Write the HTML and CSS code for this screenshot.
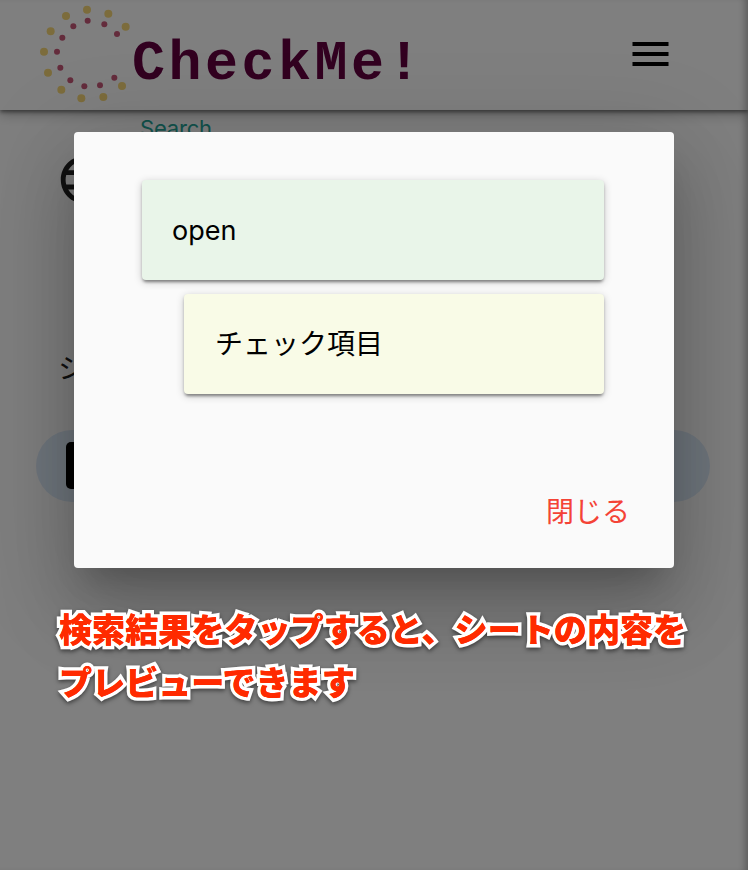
FILE: index.html
```html
<!DOCTYPE html>
<html lang="ja">
<head>
<meta charset="utf-8">
<title>CheckMe!</title>
<link rel="stylesheet" href="styles.css">
</head>
<body>
<div class="app">
  <header class="bar">
    <svg class="dots" viewBox="0 0 300 330" aria-hidden="true">
      <g fill="#f8d978">
        <circle cx="171" cy="29" r="12"/><circle cx="235" cy="41" r="12"/><circle cx="287" cy="80" r="12"/><circle cx="108" cy="48" r="12"/><circle cx="62" cy="94" r="12"/><circle cx="42" cy="155" r="12"/><circle cx="54" cy="218" r="12"/><circle cx="94" cy="269" r="12"/><circle cx="154" cy="295" r="12"/><circle cx="220" cy="291" r="12"/><circle cx="276" cy="258" r="12"/>
      </g>
      <g fill="#c85878">
        <circle cx="173" cy="62" r="9"/><circle cx="223" cy="73" r="9"/><circle cx="261" cy="102" r="9"/><circle cx="130" cy="79" r="9"/><circle cx="97" cy="113" r="9"/><circle cx="81" cy="155" r="9"/><circle cx="91" cy="203" r="9"/><circle cx="121" cy="241" r="9"/><circle cx="163" cy="259" r="9"/><circle cx="210" cy="256" r="9"/><circle cx="253" cy="233" r="9"/>
      </g>
    </svg>
    <span class="brand">CheckMe!</span>
    <svg class="menu" viewBox="0 0 37 24" aria-hidden="true"><path d="M.5 0h36v4H.5zM.5 10h36v4H.5zM.5 20h36v4H.5z"/></svg>
  </header>
  <main class="page">
    <div class="label">Search</div>
    <svg class="globe" viewBox="0 0 24 24" aria-hidden="true"><path d="M11.99 2C6.47 2 2 6.48 2 12s4.47 10 9.99 10C17.52 22 22 17.52 22 12S17.52 2 11.99 2zm6.93 6h-2.95c-.32-1.25-.78-2.45-1.38-3.56 1.84.63 3.37 1.91 4.33 3.56zM12 4.04c.83 1.2 1.48 2.53 1.91 3.96h-3.82c.43-1.43 1.08-2.76 1.91-3.96zM4.26 14C4.1 13.36 4 12.69 4 12s.1-1.36.26-2h3.38c-.08.66-.14 1.32-.14 2s.06 1.34.14 2H4.26zm.82 2h2.95c.32 1.25.78 2.45 1.38 3.56-1.84-.63-3.37-1.9-4.33-3.56zm2.95-8H5.08c.96-1.66 2.49-2.93 4.33-3.56C8.81 5.55 8.35 6.75 8.03 8zM12 19.96c-.83-1.2-1.48-2.53-1.91-3.96h3.82c-.43 1.43-1.08 2.76-1.91 3.96zM14.34 14H9.66c-.09-.66-.16-1.32-.16-2s.07-1.35.16-2h4.68c.09.65.16 1.32.16 2s-.07 1.34-.16 2zm.25 5.56c.6-1.11 1.06-2.31 1.38-3.56h2.95c-.96 1.65-2.49 2.93-4.33 3.56zM16.36 14c.08-.66.14-1.32.14-2s-.06-1.34-.14-2h3.38c.16.64.26 1.31.26 2s-.1 1.36-.26 2h-3.38z"/></svg>
    <div class="heading">シ</div>
    <div class="result"><span class="thumb"></span></div>
  </main>
</div>
<div class="overlay">
  <section class="dialog">
    <div class="card open">open</div>
    <div class="card item">チェック項目</div>
    <div class="actions"><span class="close">閉じる</span></div>
  </section>
  <p class="note" data-text="検索結果をタップすると、シートの内容を&#10;プレビューできます">検索結果をタップすると、シートの内容を
プレビューできます</p>
</div>
</body>
</html>
```
FILE: styles.css
```css
* { box-sizing: border-box; }
body {
  margin: 0;
  width: 748px;
  height: 870px;
  overflow: hidden;
  position: relative;
  font-family: Inter, "Noto Sans CJK JP", sans-serif;
  color: #000;
}
.app { height: 870px; background: #fff; box-shadow: inset -7px 0 7px -4px rgba(0,0,0,.28); }
.bar {
  position: relative;
  display: flex;
  align-items: center;
  height: 110px;
  padding: 0 79px 0 30px;
  box-shadow: 0 2px 4px rgba(0,0,0,.45), 0 4px 12px rgba(0,0,0,.28);
}
.dots { width: 100px; height: 110px; flex: none; overflow: visible; }
.brand {
  font: bold 55px/62px "Liberation Mono", monospace;
  letter-spacing: 3.5px;
  color: #640040;
  margin: 20px 0 0 2px;
}
.menu { width: 37px; height: 24px; margin-left: auto; margin-top: -2px; }
.page { display: flex; flex-direction: column; padding: 4px 38px 0 36px; }
.label { margin-left: 104px; font-size: 22px; line-height: 29px; letter-spacing: -.2px; color: #26a69a; }
.globe { width: 57.6px; height: 57.6px; margin: 8px 0 0 20px; fill: #222; }
.heading { margin: 139px 0 0 22px; font-size: 28px; line-height: 42px; color: #222; }
.result {
  display: flex;
  align-items: center;
  height: 72px;
  margin-top: 40px;
  padding-left: 30px;
  border-radius: 36px;
  background: #dfecfa;
}
.thumb { width: 48px; height: 47px; border-radius: 5px; background: #000; }
.overlay {
  position: absolute;
  inset: 0;
  background: rgba(0,0,0,.5);
  padding: 132px 60px 0;
}
.dialog {
  width: 600px;
  height: 436px;
  margin-left: 14px;
  padding: 48px 44px 0 68px;
  border-radius: 4px;
  background: #fafafa;
  box-shadow: 0 22px 30px -14px rgba(0,0,0,.2), 0 48px 76px 6px rgba(0,0,0,.14), 0 18px 92px 16px rgba(0,0,0,.12);
}
.card {
  display: flex;
  align-items: center;
  height: 100px;
  margin-right: 26px;
  padding-left: 30px;
  border-radius: 4px;
  font-size: 28px;
  box-shadow: 0 4px 3px -2px rgba(0,0,0,.25), 0 2px 3px rgba(0,0,0,.2), 0 2px 8px rgba(0,0,0,.2);
}
.open { background: #e9f5e9; font-size: 27px; }
.item { margin: 14px 26px 0 42px; padding: 0 0 4px 31px; background: #f9fbe7; }
.actions { display: flex; justify-content: flex-end; margin-top: 97px; }
.close { font-size: 28px; line-height: 42px; color: #f44336; }
.note {
  position: relative;
  z-index: 0;
  margin: 34px 0 0 -1px;
  font: 900 33.1px/53px "Noto Sans CJK JP", sans-serif;
  white-space: pre;
  color: #ff2a00;
}
.note::before {
  content: attr(data-text);
  position: absolute;
  inset: 0;
  z-index: -1;
  -webkit-text-stroke: 7px #fff;
  paint-order: stroke fill;
  stroke-linejoin: round;
  filter: drop-shadow(0 2px 2px rgba(0,0,0,.5));
}
```
